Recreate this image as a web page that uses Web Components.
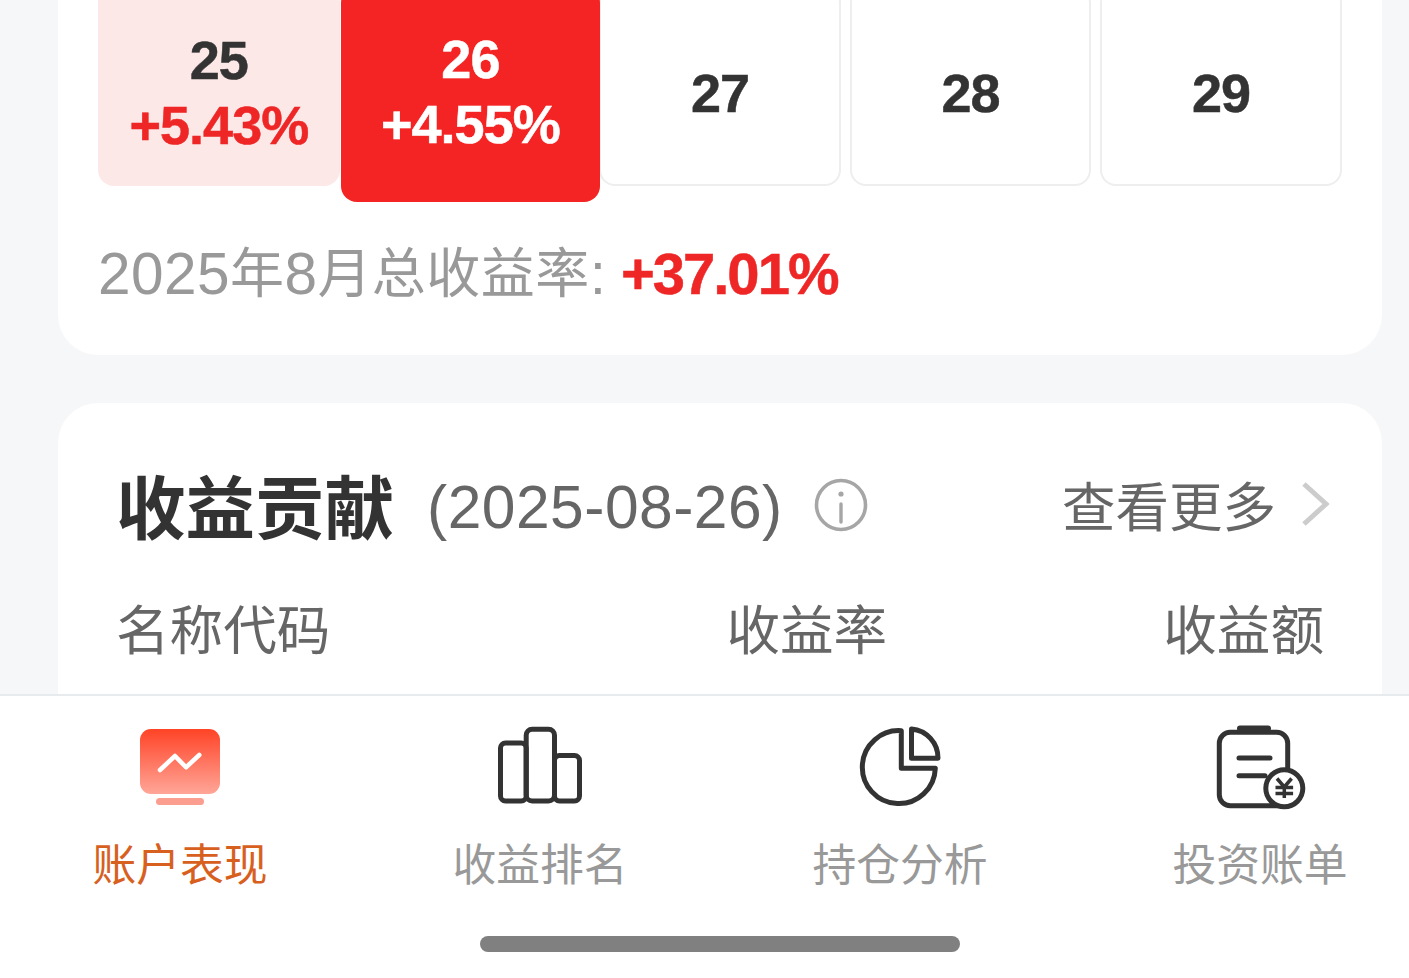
<!DOCTYPE html>
<html lang="zh"><head><meta charset="utf-8"><title>账户表现</title>
<style>html,body{margin:0;padding:0;background:#f6f7f9;overflow:hidden;font-family:"Liberation Sans","Noto Sans CJK SC",sans-serif}</style>
</head><body>
<app-page></app-page>
<template id="t-cell"><style>
:host{display:flex;flex-direction:column;align-items:center;justify-content:center;box-sizing:border-box;height:199px;padding-top:14px;border:2px solid #eeeeee;border-radius:16px;background:#fff;color:#333;font:700 54px/65px "Liberation Sans","Noto Sans CJK SC",sans-serif;letter-spacing:-1px;-webkit-text-stroke:.5px currentColor}
:host([kind=gain]){background:#fde8e8;border:0;padding-top:12px}
:host([kind=sel]){background:#f42424;color:#fff;border:0;margin:0 -9.500px -17px -7.600px;height:215px;justify-content:flex-start;padding-top:40px;position:relative;z-index:1}
.p{color:#ee2626}:host([kind=sel]) .p{color:#fff}
</style><div class="d"><slot></slot></div><div class="p" id="p"></div></template>

<template id="t-row"><style>
:host{display:grid;grid-template-columns:repeat(5,1fr);column-gap:8.8px;margin-top:-13px}
</style><slot></slot></template>

<template id="t-card"><style>
:host{display:block;background:#fff;border-radius:40px}
</style><slot></slot></template>

<template id="t-tab"><style>
:host{display:flex;flex-direction:column;align-items:center;color:#999;font:400 43.800px/52px "Noto Sans CJK SC",sans-serif}
:host([active]){color:#d8601f}
.i{height:111px;width:100%;display:flex;justify-content:center}
</style><div class="i"><slot name="icon"></slot></div><div class="l"><slot></slot></div></template>

<template id="t-page"><style>
:host{display:flex;flex-direction:column;width:1440px;height:978px;overflow:hidden;background:#f6f7f9;font-family:"Liberation Sans","Noto Sans CJK SC",sans-serif}
.scroll{height:694px;padding:0 58px;box-sizing:border-box;display:flex;flex-direction:column;gap:48px;flex:none}
.first{border-radius:0 0 40px 40px;padding:0 40px;height:355px;box-sizing:border-box;flex:none}
.total{margin-top:58px;font:400 54px/60px "Liberation Sans","Noto Sans CJK SC",sans-serif;color:#999;display:flex;align-items:center;letter-spacing:.45px}
.n{font-size:58.500px}
.total b{color:#ee2626;font-weight:700;font-size:58px;letter-spacing:-2px;margin-left:14.500px;-webkit-text-stroke:.5px currentColor}
.second{flex:none;height:291px;padding:0 58px;box-sizing:border-box;border-radius:40px 40px 0 0;overflow:hidden}
.head{display:flex;align-items:center;height:74px;margin-top:64px}
h2{margin:0;font:700 69.500px/74px "Noto Sans CJK SC",sans-serif;color:#333}
.date{margin-left:33px;padding-top:6px;font:400 60.500px/74px "Liberation Sans",sans-serif;color:#666;letter-spacing:.5px}
.info{margin:2px 0 0 31px;width:54px;height:54px;flex:none}
.more{margin-left:auto;display:flex;align-items:center;font:400 53.500px/74px "Noto Sans CJK SC",sans-serif;color:#666}
.more svg{margin:0 -8px 0 24px;width:32px;height:48px}
.cols{display:grid;grid-template-columns:1fr auto auto;column-gap:276px;margin-top:53px;font:400 53.600px/66px "Noto Sans CJK SC",sans-serif;color:#666}
.bar{height:284px;flex:none;box-sizing:border-box;background:#fff;border-top:2px solid #e8ebee;position:relative;display:grid;grid-template-columns:repeat(4,360px);align-content:start;padding-top:29px}
.home{position:absolute;left:480px;top:240px;width:480px;height:16px;border-radius:8px;background:#808080}
svg{display:block}
</style>
<div class="scroll">
<info-card class="first">
<cell-row>
<day-cell kind="gain" pct="+5.43%">25</day-cell>
<day-cell kind="sel" pct="+4.55%">26</day-cell>
<day-cell>27</day-cell><day-cell>28</day-cell><day-cell>29</day-cell>
</cell-row>
<div class="total"><span class="n">2025</span>年<span class="n">8</span>月总收益率<span class="n">:</span><b>+37.01%</b></div>
</info-card>
<info-card class="second">
<div class="head"><h2>收益贡献</h2><span class="date">(2025-08-26)</span>
<svg class="info" viewBox="0 0 54 54" fill="none" stroke="#a6a6a6" stroke-width="3.6"><circle cx="27" cy="27" r="24.500"/><path d="M27 26v18" stroke-linecap="round" stroke-width="3.400"/><circle cx="27" cy="16" r="2.600" fill="#a6a6a6" stroke="none"/></svg>
<div class="more">查看更多<svg viewBox="0 0 32 48" fill="none" stroke="#cccccc" stroke-width="5"><path d="M4 4l22 20L4 44"/></svg></div></div>
<div class="cols"><span>名称代码</span><span>收益率</span><span>收益额</span></div>
</info-card>
</div>
<div class="bar">
<tab-item active><svg slot="icon" width="84" height="82" viewBox="0 0 84 82" fill="none"><defs><linearGradient id="g" x1="0" y1="0" x2="0" y2="1"><stop offset="0" stop-color="#ff4326"/><stop offset="1" stop-color="#ffa698"/></linearGradient></defs><rect x="2" y="4" width="80" height="65" rx="11" fill="url(#g)"/><rect x="18" y="73" width="48" height="7" rx="3.500" fill="#fb9e90"/><path d="M22 45l15-14 11 11.300 13.300-12.300" stroke="#fff" stroke-width="4.500" stroke-linecap="round" stroke-linejoin="round"/></svg>账户表现</tab-item>
<tab-item><svg slot="icon" width="90" height="82" viewBox="0 0 90 82" fill="none" stroke="#333" stroke-width="5"><rect x="5.500" y="18" width="25.700" height="58" rx="5"/><rect x="31.200" y="4.250" width="28.300" height="71.750" rx="6"/><rect x="59.500" y="30.500" width="25" height="45.500" rx="5"/></svg>收益排名</tab-item>
<tab-item><svg slot="icon" width="84" height="84" viewBox="-2 0 84 84" fill="none" stroke="#333" stroke-width="5" stroke-linejoin="round"><path d="M41.300 5.700v37.600h34a36.500 36.500 0 1 1-34-37.600z"/><path d="M51.500 4v29.300h26.500a29 29 0 0 0-26.500-29.300z"/></svg>持仓分析</tab-item>
<tab-item><svg slot="icon" width="92" height="86" viewBox="0 0 92 86" fill="none" stroke="#333" stroke-width="5" stroke-linecap="round"><rect x="5.300" y="7.300" width="68.400" height="73.400" rx="11"/><path d="M26 3.500h28" stroke-width="6"/><path d="M25 33h31M25 50.700h26"/><circle cx="70.300" cy="63.300" r="18.500" fill="#fff"/><path d="M63 53.500l7.300 8.500 7.300-8.500M61.500 62.500h17.600M61.500 68.500h17.600M70.300 62v11" stroke-width="3.500" stroke-linecap="butt"/></svg>投资账单</tab-item>
<div class="home"></div>
</div>
</template>
<script>
function mk(name,tid,init){customElements.define(name,class extends HTMLElement{constructor(){super();this.attachShadow({mode:'open'}).appendChild(document.getElementById(tid).content.cloneNode(true));}connectedCallback(){init&&init.call(this);}});}
mk('day-cell','t-cell',function(){const p=this.shadowRoot.getElementById('p');const v=this.getAttribute('pct');if(v)p.textContent=v;else p.remove();});
mk('cell-row','t-row');mk('info-card','t-card');mk('tab-item','t-tab');mk('app-page','t-page');
</script>
</body></html>
